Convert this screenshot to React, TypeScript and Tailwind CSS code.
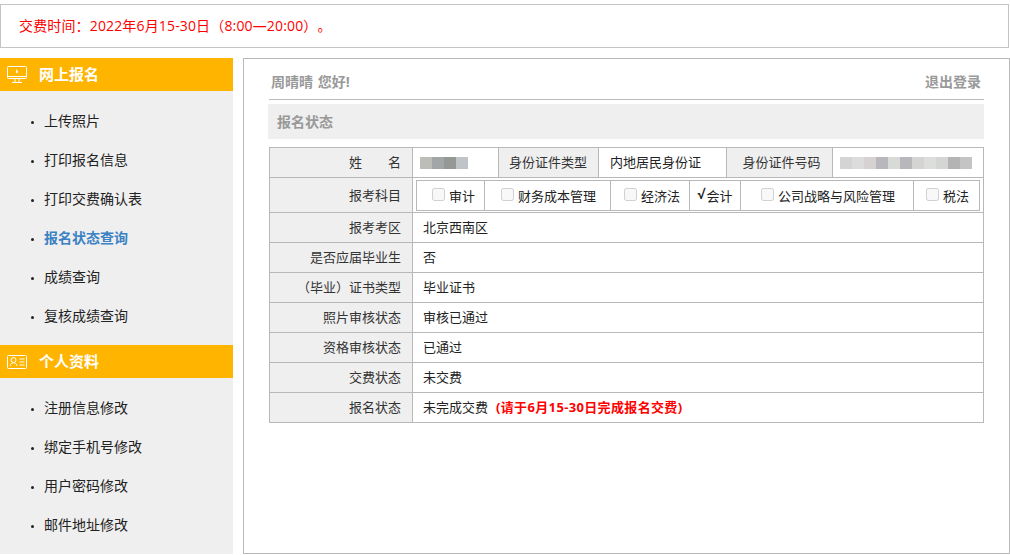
import React from 'react';

const font = '[font-family:"Open_Sans","Noto_Sans_CJK_SC",sans-serif] [text-spacing-trim:space-all]';

const menuOne = [
  { label: '上传照片' },
  { label: '打印报名信息' },
  { label: '打印交费确认表' },
  { label: '报名状态查询', active: true },
  { label: '成绩查询' },
  { label: '复核成绩查询' },
];

const menuTwo = [
  { label: '注册信息修改' },
  { label: '绑定手机号修改' },
  { label: '用户密码修改' },
  { label: '邮件地址修改' },
];

const nameBlocks = ['bg-[#bcbcb8]', 'bg-[#a2a6a6]', 'bg-[#969896]', 'bg-[#c0c4c8]'];
const idBlocks = [
  'bg-[#d4d4d4]',
  'bg-[#dcdcdc]',
  'bg-[#d6d2d2]',
  'bg-[#b8b8bc]',
  'bg-[#d8dad8]',
  'bg-[#b8b8bc]',
  'bg-[#d4d4d2]',
  'bg-[#dcdedc]',
  'bg-[#d4d6d4]',
  'bg-[#b4b4b4]',
  'bg-[#c4c4c4]',
];

const rows = [
  { label: '报考考区', value: '北京西南区' },
  { label: '是否应届毕业生', value: '否' },
  { label: '（毕业）证书类型', value: '毕业证书' },
  { label: '照片审核状态', value: '审核已通过' },
  { label: '资格审核状态', value: '已通过' },
  { label: '交费状态', value: '未交费' },
];

const MonitorIcon = () => (
  <svg width="20" height="18" viewBox="0 0 20 18" fill="none" stroke="#fff" strokeWidth="1">
    <rect x="0.5" y="0.5" width="19" height="12" rx="1" />
    <path d="M0.5 10.5H19.5M8 13V16M12 13V16M5 16.5H15" />
    <path d="M9 3L9 7.5L10.2 6.4L11.6 6.4Z" fill="#fff" stroke="none" />
  </svg>
);

const CardIcon = () => (
  <svg width="20" height="16" viewBox="0 0 20 16" fill="none" stroke="#fff" strokeWidth="1">
    <rect x="0.5" y="1.5" width="19" height="13" rx="1" />
    <circle cx="6.5" cy="6" r="2.5" />
    <path d="M3 12C3.4 9.8 4.8 8.8 6.5 8.8C8.2 8.8 9.6 9.8 10 12" />
    <path d="M12.5 5H17.5M12.5 8H17.5M12.5 11H17.5" />
  </svg>
);

const MenuHeader = ({ icon, title }: { icon: React.ReactNode; title: string }) => (
  <div className="flex h-[33px] items-center bg-[#ffb400] pl-[7px]">
    <span className="flex w-[32px]">{icon}</span>
    <span className="text-[15px] font-bold text-white">{title}</span>
  </div>
);

const MenuList = ({ items }: { items: { label: string; active?: boolean }[] }) => (
  <ul className="flex flex-col pt-[10px] pb-[10px]">
    {items.map((item) => (
      <li key={item.label} className="flex h-[39px] items-center pl-[31px]">
        <span className="mr-[10px] mt-[3px] h-[3px] w-[3px] rounded-full bg-[#222]" />
        <span className={item.active ? 'text-[14px] font-bold text-[#3b82c4]' : 'text-[14px] text-[#222]'}>
          {item.label}
        </span>
      </li>
    ))}
  </ul>
);

const labelCell = 'border border-[#b8b8b8] bg-[#efefef] text-[#333]';
const valueCell = 'border border-[#b8b8b8] text-[#222]';

const Subject = ({ name, checked, className }: { name: string; checked?: boolean; className: string }) => (
  <td className={`border border-[#b8b8b8] p-0 ${className}`}>
    <span className="flex items-center justify-center">
      {checked ? (
        <span className="mr-[2px] font-bold">√</span>
      ) : (
        <input type="checkbox" disabled className="mr-[4px] mb-[1px] h-[13px] w-[13px]" />
      )}
      <span className="mt-[4px]">{name}</span>
    </span>
  </td>
);

export default function App() {
  return (
    <div className={`h-[555px] w-[1010px] overflow-hidden bg-white pt-[4px] ${font}`}>
      <div className="mb-[10px] flex h-[44px] w-[1009px] items-center border border-[#c4c4c4] pb-[2px] pl-[18px] text-[14px] tracking-[0.15px] text-[#ff0000]">
        交费时间：2022年6月15-30日（8:00—20:00）。
      </div>

      <div className="flex h-[496px] w-[1009px] items-start gap-[10px]">
        <aside className="h-[496px] w-[233px] shrink-0 bg-[#efefef]">
          <MenuHeader icon={<MonitorIcon />} title="网上报名" />
          <MenuList items={menuOne} />
          <MenuHeader icon={<CardIcon />} title="个人资料" />
          <MenuList items={menuTwo} />
        </aside>

        <main className="h-[496px] flex-1 border border-[#b8b8b8] px-[25px]">
          <div className="flex h-[41px] items-center justify-between border-b border-[#bbb] pr-[3px] pl-[2px] pt-[4px] text-[14px] font-bold text-[#999]">
            <span className="[word-spacing:1px]">周晴晴 您好!</span>
            <span>退出登录</span>
          </div>
          <div className="mt-[4px] -ml-[1px] flex h-[35px] items-center bg-[#efefef] pl-[9px] text-[14px] font-bold text-[#999]">
            报名状态
          </div>

          <table className="mt-[8px] w-[714px] table-fixed border-collapse text-[13px]">
            <colgroup>
              <col className="w-[143px]" />
              <col className="w-[86px]" />
              <col className="w-[100px]" />
              <col className="w-[128px]" />
              <col className="w-[106px]" />
              <col className="w-[151px]" />
            </colgroup>
            <tbody>
              <tr className="h-[30px]">
                <td className={`${labelCell} pr-[11px] text-right`}>
                  <span className="flex justify-end gap-[26px]">
                    <span>姓</span>
                    <span>名</span>
                  </span>
                </td>
                <td className={`${valueCell} px-[7px]`}>
                  <div className="flex">
                    {nameBlocks.map((c) => (
                      <span key={c} className={`h-[12px] w-[12px] ${c}`} />
                    ))}
                  </div>
                </td>
                <td className={`${labelCell} pr-[1px] text-center`}>身份证件类型</td>
                <td className={`${valueCell} pl-[11px]`}>内地居民身份证</td>
                <td className={`${labelCell} pl-[4px] text-center`}>身份证件号码</td>
                <td className={`${valueCell} pl-[7px]`}>
                  <div className="flex">
                    {idBlocks.map((c, i) => (
                      <span key={i} className={`h-[12px] w-[12px] ${c}`} />
                    ))}
                  </div>
                </td>
              </tr>
              <tr className="h-[35px]">
                <td className={`${labelCell} pt-[2px] pr-[11px] text-right`}>报考科目</td>
                <td colSpan={5} className={`${valueCell} px-[3px]`}>
                  <table className="w-[563px] table-fixed border-collapse">
                    <tbody>
                      <tr className="h-[30px]">
                        <Subject name="审计" className="w-[68px] pl-[6px]" />
                        <Subject name="财务成本管理" className="w-[126px] pl-[2px]" />
                        <Subject name="经济法" className="w-[79px] pl-[4px]" />
                        <Subject name="会计" checked className="w-[51px]" />
                        <Subject name="公司战略与风险管理" className="w-[173px] pl-[2px]" />
                        <Subject name="税法" className="w-[66px] pl-[2px]" />
                      </tr>
                    </tbody>
                  </table>
                </td>
              </tr>
              {rows.map((row) => (
                <tr key={row.label} className="h-[30px]">
                  <td className={`${labelCell} pr-[11px] text-right`}>{row.label}</td>
                  <td colSpan={5} className={`${valueCell} pl-[10px]`}>
                    {row.value}
                  </td>
                </tr>
              ))}
              <tr className="h-[30px]">
                <td className={`${labelCell} pr-[11px] text-right`}>报名状态</td>
                <td colSpan={5} className={`${valueCell} pl-[10px]`}>
                  未完成交费
                  <span className="ml-[8px] font-bold tracking-[0.35px] text-[#ff0000]">(请于6月15-30日完成报名交费)</span>
                </td>
              </tr>
            </tbody>
          </table>
        </main>
      </div>
    </div>
  );
}
